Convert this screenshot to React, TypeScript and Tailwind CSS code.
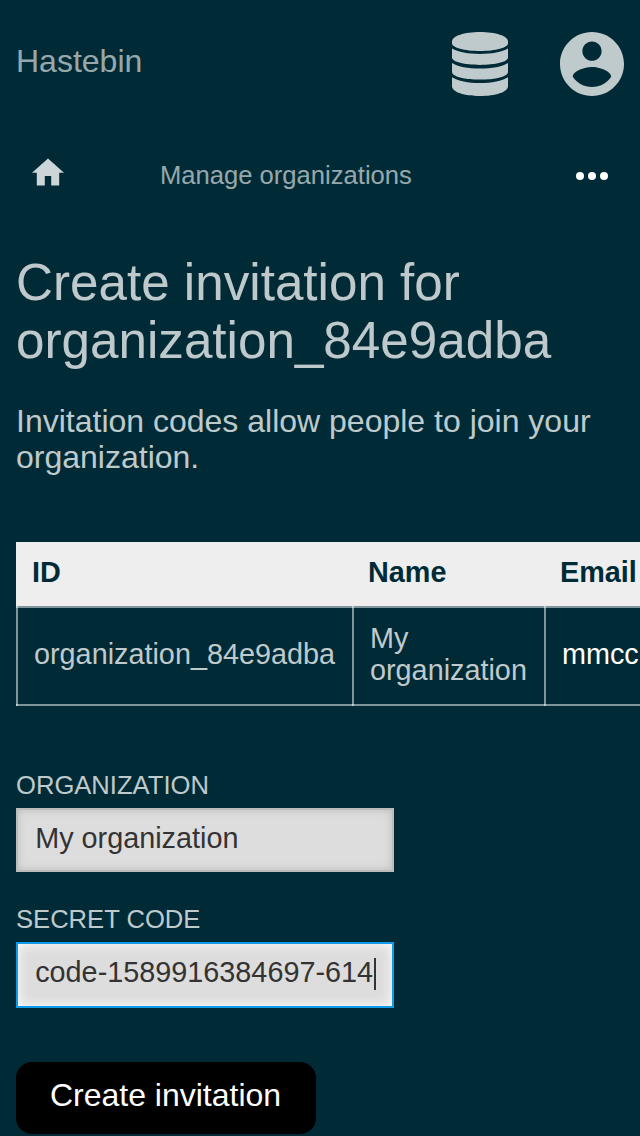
import React from "react";

const CELL = "-my-0.5 flex items-center border-l-2 border-white/50 px-4 pt-3.5 pb-[18px]";

function Header() {
  return (
    <header className="flex h-32 items-start justify-between px-4 pt-8">
      <a className="mt-[11px] text-[32px] leading-9 text-white/60">Hastebin</a>
      <div className="flex gap-13 text-[#bfcacd]">
        <svg className="h-16 w-14" viewBox="0 0 56 64" fill="currentColor">
          <path d="M28 0C43.5 0 56 4 56 9.5v2C56 15.5 43.5 19 28 19S0 15.5 0 11.5v-2C0 4 12.5 0 28 0z" />
          <path d="M0 16.6C6 20.2 16 22 28 22s22-1.8 28-5.4v9C56 30 43.5 33 28 33S0 30 0 25.6z" />
          <path d="M0 30.9C6 34.7 16 36.5 28 36.5s22-1.8 28-5.6v9C56 44.4 43.5 47.6 28 47.6S0 44.4 0 39.9z" />
          <path d="M0 45.2C6 49 16 51 28 51s22-2 28-5.8v9C56 60 43.5 64 28 64S0 60 0 54.2z" />
        </svg>
        <svg className="size-16" viewBox="2 2 20 20" fill="currentColor">
          <path d="M12 2C6.48 2 2 6.48 2 12s4.48 10 10 10 10-4.48 10-10S17.52 2 12 2zm0 3c1.66 0 3 1.34 3 3s-1.34 3-3 3-3-1.34-3-3 1.34-3 3-3zm0 14.2c-2.5 0-4.71-1.28-6-3.22.03-1.99 4-3.08 6-3.08 1.99 0 5.97 1.09 6 3.08-1.29 1.94-3.5 3.22-6 3.22z" />
        </svg>
      </div>
    </header>
  );
}

function Nav() {
  return (
    <nav className="flex h-24 items-center px-8">
      <svg className="mb-2 h-7 w-8 text-[#ccd5d7]" viewBox="2 2.75 20 17.5" fill="currentColor">
        <path d="M10 20v-6h4v6h5v-8h3L12 3 2 12h3v8z" />
      </svg>
      <a className="mb-0.5 ml-24 text-[25.6px] leading-8 text-white/60">Manage organizations</a>
      <svg className="ml-auto h-2 w-8" viewBox="0 0 32 8" fill="#fff">
        <circle cx="4" cy="4" r="4" />
        <circle cx="16" cy="4" r="4" />
        <circle cx="28" cy="4" r="4" />
      </svg>
    </nav>
  );
}

function OrganizationTable() {
  return (
    <div className="mt-[67px] overflow-hidden pl-4 text-[28.8px] leading-8">
      <div className="w-[900px]">
        <div className="grid h-16 grid-cols-[336px_192px_1fr] bg-[#eee] font-bold text-[#002b36]">
          <div className="px-4 pt-3.5">ID</div>
          <div className="px-4 pt-3.5">Name</div>
          <div className="px-4 pt-3.5">Email</div>
        </div>
        <div className="grid h-[100px] grid-cols-[336px_192px_1fr] border-y-2 border-white/50">
          <div className={CELL}>organization_84e9adba</div>
          <div className={CELL}>My organization</div>
          <div className={CELL}>
            <span className="text-white">mmcc</span>
          </div>
        </div>
      </div>
    </div>
  );
}

function InvitationForm() {
  return (
    <form className="flex flex-col items-start px-4 pt-[63px]">
      <label className="text-[25.6px] leading-8">ORGANIZATION</label>
      <div className="mt-[7px] h-16 w-[378px] border-2 border-[#bbb] bg-[#ddd] px-[17.2px] pt-3 text-[28.8px] leading-8 text-[#333] shadow-[inset_0_0_8px_#bbb]">
        My organization
      </div>
      <label className="mt-[31px] text-[25.6px] leading-8">SECRET CODE</label>
      <div className="mt-[7px] flex h-[66px] w-[378px] border-2 border-[#0f9bea] bg-[#ddd] pl-[17.2px] pt-3 text-[28.8px] leading-8 text-[#333] shadow-[inset_0_0_12px_#fff]">
        code-1589916384697-614
        <span className="ml-px mt-0.5 h-8 w-0.5 shrink-0 bg-[#333]" />
      </div>
      <button type="button" className="mt-[54px] h-[72px] w-[300px] rounded-2xl bg-black pr-px pb-1.5 text-[32px] leading-9 text-white">
        Create invitation
      </button>
    </form>
  );
}

export default function App() {
  return (
    <div className="h-[1136px] w-[640px] overflow-hidden bg-[#002b36] font-['Liberation_Sans',Arial,sans-serif] text-white/75">
      <Header />
      <Nav />
      <main>
        <h1 className="mt-[30px] px-4 text-[51.2px] leading-[58px]">
          Create invitation for
          <br />
          organization_84e9adba
        </h1>
        <p className="mt-[33px] px-4 text-[32px] leading-9">
          Invitation codes allow people to join your organization.
        </p>
        <OrganizationTable />
        <InvitationForm />
      </main>
    </div>
  );
}
